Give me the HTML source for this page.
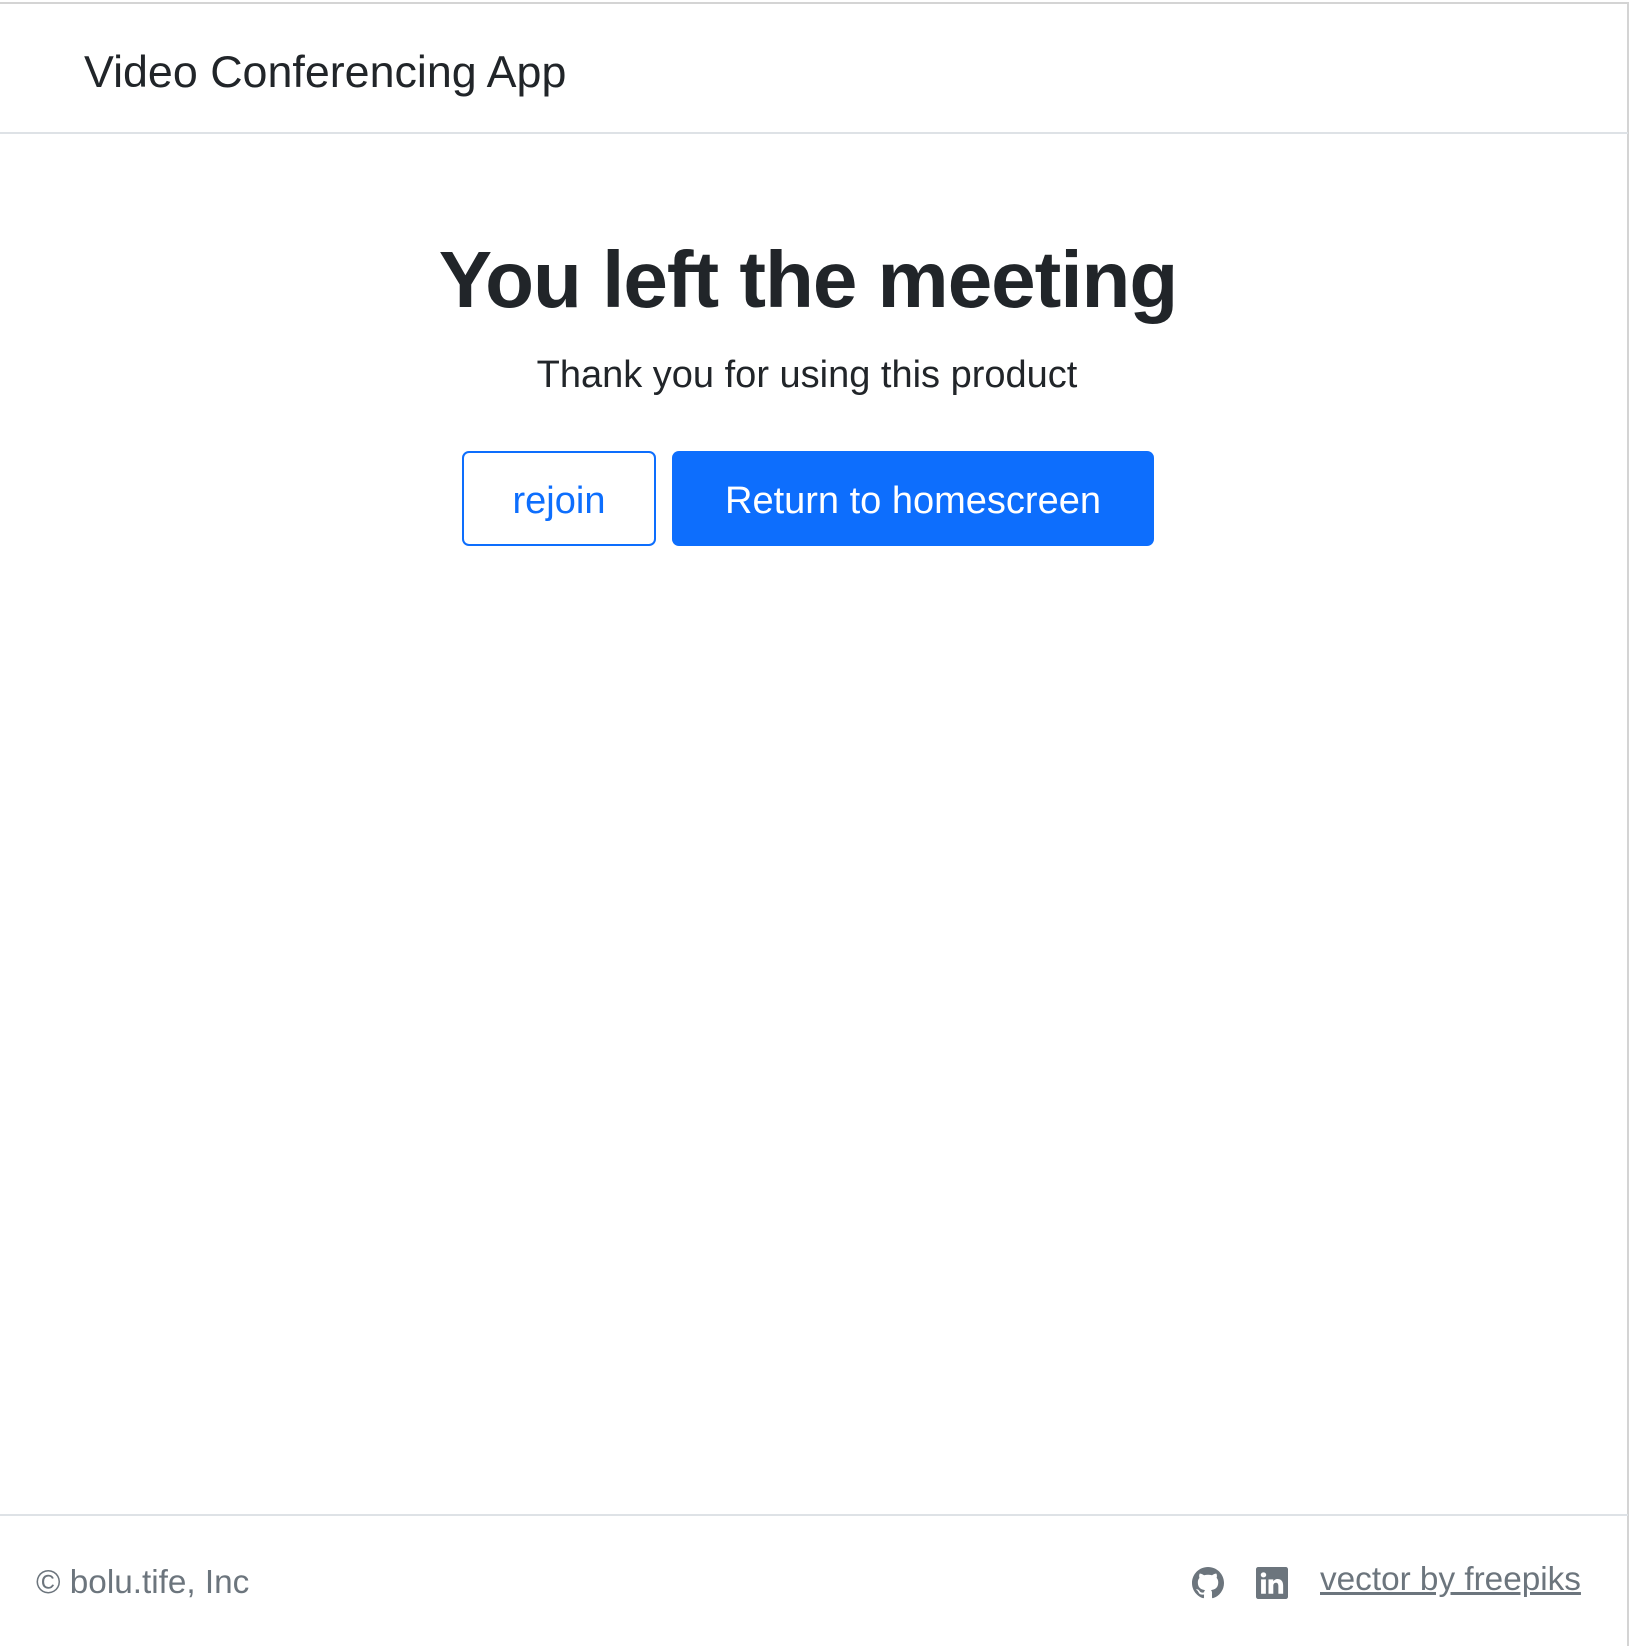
<!DOCTYPE html>
<html><head><meta charset="utf-8"><style>
*{margin:0;padding:0;box-sizing:border-box}
html,body{width:1630px;height:1646px;background:#fff;overflow:hidden;font-family:"Liberation Sans",sans-serif;color:#212529}
.frame{position:absolute;left:0;top:2px;width:1629px;height:1644px;border-top:2px solid #d4d4d4;border-right:2px solid #d4d4d4}
.hdr{position:absolute;left:0;top:0;width:1628px;height:134px;border-bottom:2px solid #dee2e6}
.title{position:absolute;left:84px;top:46px;font-size:44.8px;line-height:52px;white-space:nowrap}
h1{position:absolute;left:0;width:1616px;top:232px;text-align:center;font-size:80px;font-weight:bold;letter-spacing:-1px;line-height:96px}
.sub{position:absolute;left:0;width:1614px;top:352px;text-align:center;font-size:38px;line-height:46px}
.btn{position:absolute;top:451px;height:95px;border-radius:7px;font-size:38px;display:flex;align-items:center;justify-content:center;padding-top:6px}
.b1{left:462px;width:194px;border:2px solid #0d6efd;color:#0d6efd}
.b2{left:672px;width:482px;background:#0d6efd;color:#fff}
.ftr{position:absolute;left:0;top:1514px;width:1628px;border-top:2px solid #dee2e6}
.copy{position:absolute;left:36px;top:1563px;font-size:33.3px;line-height:40px;color:#6c757d}
.link{position:absolute;left:1320px;top:1560px;font-size:33.3px;line-height:40px;color:#6c757d;text-decoration:underline}
svg{position:absolute}
</style></head><body>
<div class="frame"></div>
<div class="hdr"><div class="title">Video Conferencing App</div></div>
<h1>You left the meeting</h1>
<div class="sub">Thank you for using this product</div>
<div class="btn b1">rejoin</div>
<div class="btn b2">Return to homescreen</div>
<div class="ftr"></div>
<div class="copy">© bolu.tife, Inc</div>
<svg style="left:1192px;top:1567px" width="32" height="32" viewBox="0 0 16 16"><path fill="#6c757d" d="M8 0C3.58 0 0 3.58 0 8c0 3.54 2.29 6.53 5.47 7.59.4.07.55-.17.55-.38 0-.19-.01-.82-.01-1.49-2.01.37-2.53-.49-2.69-.94-.09-.23-.48-.94-.82-1.13-.28-.15-.68-.52-.01-.53.63-.01 1.08.58 1.23.82.72 1.21 1.87.87 2.33.66.07-.52.28-.87.51-1.07-1.78-.2-3.64-.89-3.640-3.95 0-.87.31-1.59.82-2.15-.08-.2-.36-1.02.08-2.12 0 0 .67-.21 2.2.82.64-.18 1.32-.27 2-.27.68 0 1.36.09 2 .27 1.53-1.04 2.2-.82 2.2-.82.44 1.1.16 1.92.08 2.12.51.56.82 1.27.82 2.15 0 3.07-1.87 3.75-3.65 3.95.29.25.54.73.54 1.48 0 1.07-.01 1.93-.01 2.2 0 .21.15.46.55.38A8.01 8.01 0 0016 8c0-4.42-3.58-8-8-8z"/></svg>
<svg style="left:1256px;top:1567px" width="32" height="32" viewBox="0 0 16 16"><path fill="#6c757d" d="M0 1.15C0 .52.52 0 1.18 0h13.64C15.48 0 16 .52 16 1.15v13.7c0 .63-.52 1.15-1.18 1.15H1.18C.52 16 0 15.48 0 14.85V1.15zm4.94 12.24V6.17H2.54v7.22h2.4zM3.74 5.18c.84 0 1.36-.55 1.36-1.25-.02-.71-.52-1.25-1.34-1.25-.82 0-1.36.54-1.36 1.25 0 .7.52 1.25 1.33 1.25h.01zm4.91 8.21V9.359c0-.216.016-.432.08-.586.173-.431.568-.878 1.232-.878.869 0 1.216.662 1.216 1.634v3.87h2.4V9.25c0-2.22-1.184-3.252-2.764-3.252-1.274 0-1.845.7-2.165 1.193v.025h-.016a5.54 5.54 0 01.016-.025V6.169h-2.4c.03.678 0 7.225 0 7.225h2.4z"/></svg>
<div class="link">vector by freepiks</div>
</body></html>
